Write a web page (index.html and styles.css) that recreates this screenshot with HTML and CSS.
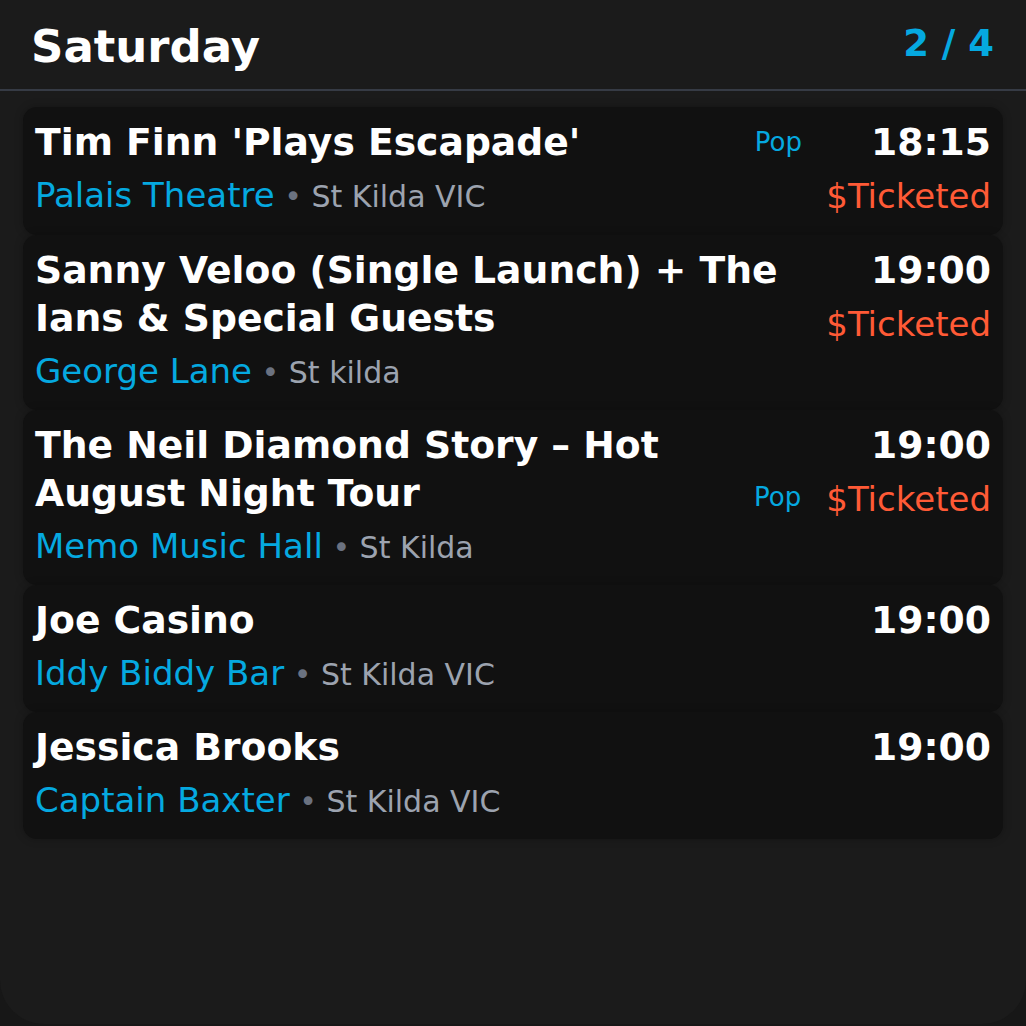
FILE: index.html
```html
<!DOCTYPE html>
<html lang="en">
<head>
  <meta charset="UTF-8">
  <title>Gigs - Saturday</title>
  <link rel="stylesheet" href="styles.css">
</head>
<body>
  <div class="panel">
    <header class="day-header">
      <h1>Saturday</h1>
      <span class="page-count">2 / 4</span>
    </header>

    <ul class="gig-list">
      <li class="gig">
        <div class="info">
          <div class="title">Tim Finn 'Plays Escapade'</div>
          <div class="venue"><span class="venue-name">Palais Theatre</span><span class="suburb"> <span class="dot">•</span> St Kilda VIC</span></div>
        </div>
        <div class="meta">
          <div class="meta-row">
            <span class="genre">Pop</span>
            <span class="time">18:15</span>
          </div>
          <div class="meta-row">
            <span class="price">$Ticketed</span>
          </div>
        </div>
      </li>

      <li class="gig">
        <div class="info">
          <div class="title">Sanny Veloo (Single Launch) + The Ians &amp; Special Guests</div>
          <div class="venue"><span class="venue-name">George Lane</span><span class="suburb"> <span class="dot">•</span> St kilda</span></div>
        </div>
        <div class="meta">
          <div class="meta-row">
            <span class="time">19:00</span>
          </div>
          <div class="meta-row">
            <span class="price">$Ticketed</span>
          </div>
        </div>
      </li>

      <li class="gig">
        <div class="info">
          <div class="title">The Neil Diamond Story – Hot August Night Tour</div>
          <div class="venue"><span class="venue-name">Memo Music Hall</span><span class="suburb"> <span class="dot">•</span> St Kilda</span></div>
        </div>
        <div class="meta">
          <div class="meta-row">
            <span class="time">19:00</span>
          </div>
          <div class="meta-row">
            <span class="genre">Pop</span>
            <span class="price">$Ticketed</span>
          </div>
        </div>
      </li>

      <li class="gig">
        <div class="info">
          <div class="title">Joe Casino</div>
          <div class="venue"><span class="venue-name">Iddy Biddy Bar</span><span class="suburb"> <span class="dot">•</span> St Kilda VIC</span></div>
        </div>
        <div class="meta">
          <div class="meta-row">
            <span class="time">19:00</span>
          </div>
        </div>
      </li>

      <li class="gig">
        <div class="info">
          <div class="title">Jessica Brooks</div>
          <div class="venue"><span class="venue-name">Captain Baxter</span><span class="suburb"> <span class="dot">•</span> St Kilda VIC</span></div>
        </div>
        <div class="meta">
          <div class="meta-row">
            <span class="time">19:00</span>
          </div>
        </div>
      </li>
    </ul>
  </div>
</body>
</html>
```

FILE: styles.css
```css
html, body {
  margin: 0;
  padding: 0;
  background-color: #171717;
}

body {
  font-family: "DejaVu Sans", Verdana, sans-serif;
  color: #fff;
  width: 1026px;
  height: 1026px;
  overflow: hidden;
}

.panel {
  box-sizing: border-box;
  height: 1024px;
  background-color: #1b1b1b;
  border-radius: 0 0 44px 44px;
}

.day-header {
  display: flex;
  justify-content: space-between;
  align-items: center;
  box-sizing: border-box;
  height: 91px;
  padding: 0 32px 0 31px;
  border-bottom: 2px solid #363b45;
}

.day-header h1 {
  margin: 0;
  font-size: 45px;
  font-weight: bold;
  line-height: 1;
  padding-top: 4px;
}

.page-count {
  color: #05a9e0;
  font-size: 37px;
  font-weight: bold;
  padding-bottom: 2px;
}

.gig-list {
  list-style: none;
  margin: 0;
  padding: 16px 23px 0 23px;
}

.gig {
  display: grid;
  grid-template-columns: 1fr auto;
  column-gap: 16px;
  background-color: #111;
  border-radius: 14px;
  padding: 11px 12px 13px 12px;
  box-shadow: 0 0 8px rgba(0, 0, 0, 0.25);
}

.title {
  font-size: 37.7px;
  font-weight: bold;
  line-height: 48px;
}

.venue {
  margin-top: 5px;
  font-size: 34px;
  line-height: 48px;
  white-space: nowrap;
}

.venue-name {
  color: #05a9e0;
}

.suburb {
  color: #9ca3af;
  font-size: 30px;
}

.dot {
  color: #6b7280;
}

.meta {
  display: flex;
  flex-direction: column;
}

.meta-row {
  display: flex;
  justify-content: flex-end;
  align-items: center;
  gap: 25px;
}

.time {
  font-size: 37.7px;
  font-weight: bold;
  line-height: 48px;
}

.price {
  color: #ff5a36;
  font-size: 34px;
  line-height: 51px;
  margin-top: 5px;
}

.genre {
  color: #05a9e0;
  font-size: 26px;
}

.meta-row .time,
.meta-row .price {
  min-width: 164px;
  text-align: right;
}
```
